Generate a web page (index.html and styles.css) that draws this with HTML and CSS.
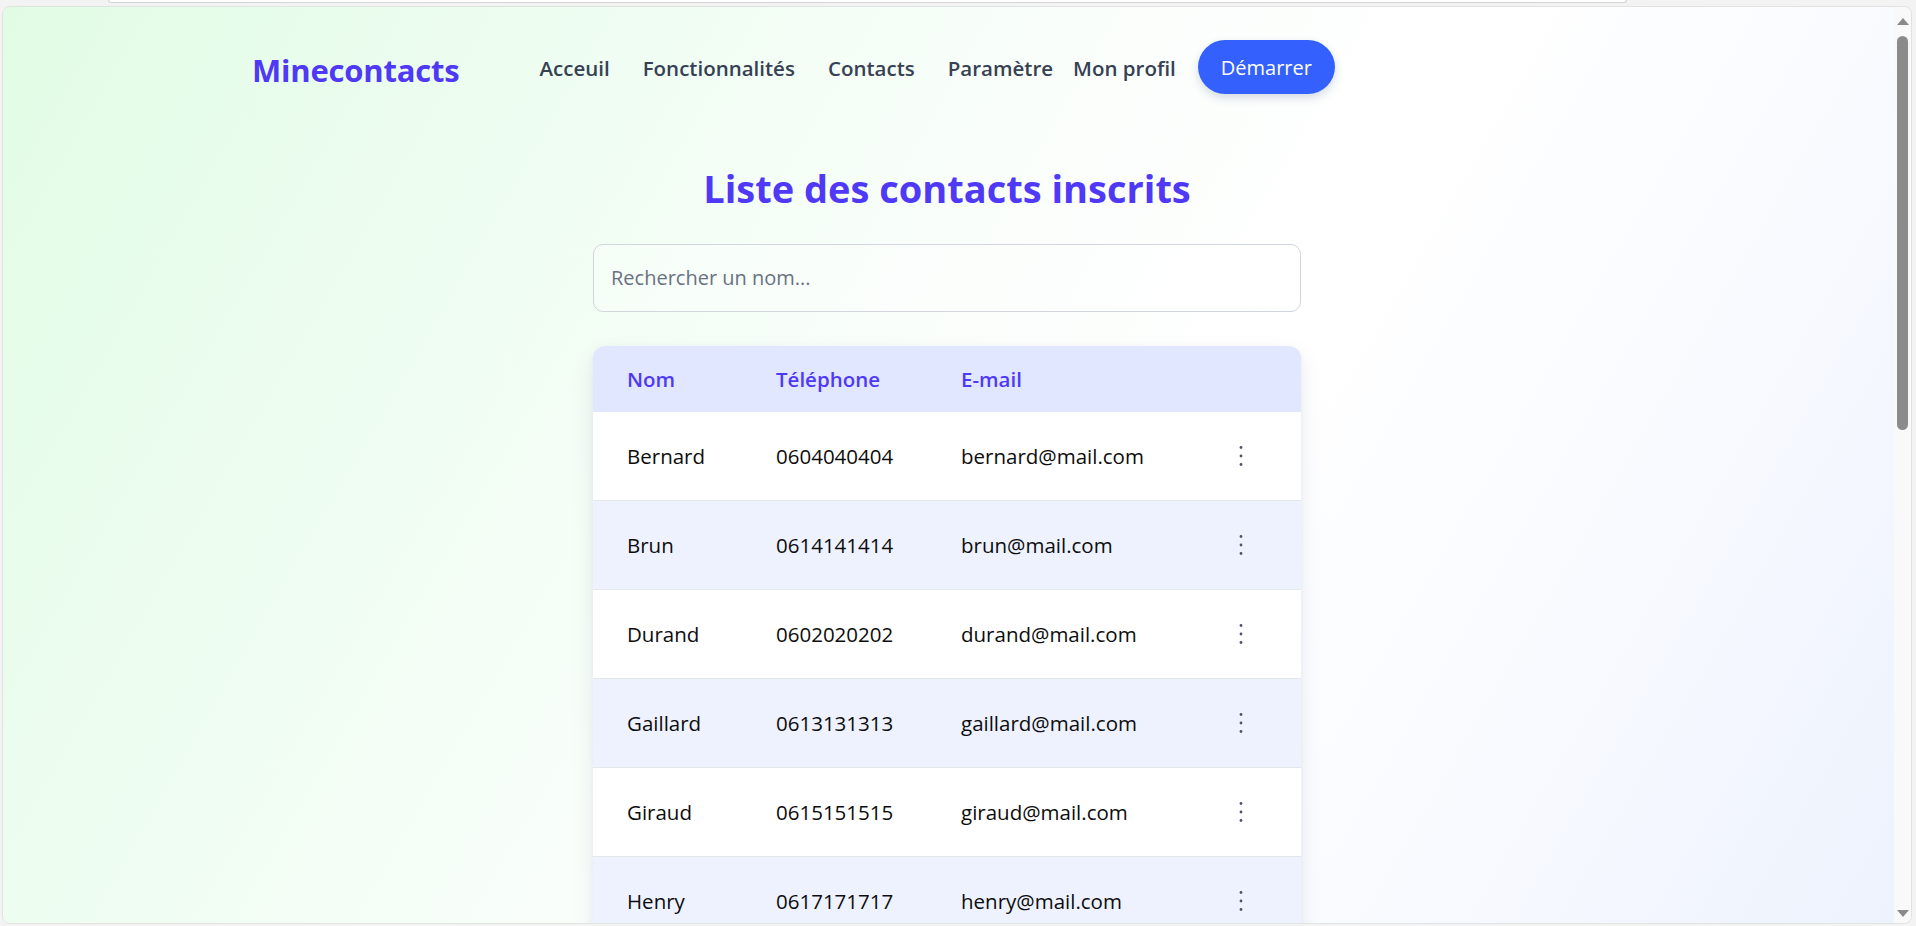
FILE: index.html
```html
<!DOCTYPE html>
<html lang="fr">
<head>
<meta charset="utf-8">
<title>Minecontacts</title>
<link rel="stylesheet" href="styles.css">
</head>
<body>
<div class="chrome-top"><div class="addr-edge"></div></div>
<div class="window">
  <div class="page">
    <nav class="nav">
      <a class="logo">Minecontacts</a>
      <ul class="links">
        <li>Acceuil</li>
        <li>Fonctionnalités</li>
        <li>Contacts</li>
        <li>Paramètre</li>
      </ul>
      <a class="profile">Mon profil</a>
      <button class="start">Démarrer</button>
    </nav>
    <main class="content">
      <h1 class="title">Liste des contacts inscrits</h1>
      <input class="search" type="text" placeholder="Rechercher un nom...">
      <div class="table">
        <div class="row head">
          <div class="cell">Nom</div>
          <div class="cell">Téléphone</div>
          <div class="cell">E-mail</div>
          <div class="cell act"></div>
        </div>
        <div class="row">
          <div class="cell">Bernard</div>
          <div class="cell">0604040404</div>
          <div class="cell">bernard@mail.com</div>
          <div class="cell act"><svg class="dots" viewBox="0 0 10 24"><circle cx="5" cy="3.5" r="1.4"/><circle cx="5" cy="12" r="1.4"/><circle cx="5" cy="20.5" r="1.4"/></svg></div>
        </div>
        <div class="row alt">
          <div class="cell">Brun</div>
          <div class="cell">0614141414</div>
          <div class="cell">brun@mail.com</div>
          <div class="cell act"><svg class="dots" viewBox="0 0 10 24"><circle cx="5" cy="3.5" r="1.4"/><circle cx="5" cy="12" r="1.4"/><circle cx="5" cy="20.5" r="1.4"/></svg></div>
        </div>
        <div class="row">
          <div class="cell">Durand</div>
          <div class="cell">0602020202</div>
          <div class="cell">durand@mail.com</div>
          <div class="cell act"><svg class="dots" viewBox="0 0 10 24"><circle cx="5" cy="3.5" r="1.4"/><circle cx="5" cy="12" r="1.4"/><circle cx="5" cy="20.5" r="1.4"/></svg></div>
        </div>
        <div class="row alt">
          <div class="cell">Gaillard</div>
          <div class="cell">0613131313</div>
          <div class="cell">gaillard@mail.com</div>
          <div class="cell act"><svg class="dots" viewBox="0 0 10 24"><circle cx="5" cy="3.5" r="1.4"/><circle cx="5" cy="12" r="1.4"/><circle cx="5" cy="20.5" r="1.4"/></svg></div>
        </div>
        <div class="row">
          <div class="cell">Giraud</div>
          <div class="cell">0615151515</div>
          <div class="cell">giraud@mail.com</div>
          <div class="cell act"><svg class="dots" viewBox="0 0 10 24"><circle cx="5" cy="3.5" r="1.4"/><circle cx="5" cy="12" r="1.4"/><circle cx="5" cy="20.5" r="1.4"/></svg></div>
        </div>
        <div class="row alt">
          <div class="cell">Henry</div>
          <div class="cell">0617171717</div>
          <div class="cell">henry@mail.com</div>
          <div class="cell act"><svg class="dots" viewBox="0 0 10 24"><circle cx="5" cy="3.5" r="1.4"/><circle cx="5" cy="12" r="1.4"/><circle cx="5" cy="20.5" r="1.4"/></svg></div>
        </div>
      </div>
    </main>
  </div>
  <div class="scrollbar">
    <div class="arrow up"></div>
    <div class="thumb"></div>
    <div class="track-rest"></div>
    <div class="arrow down"></div>
  </div>
</div>
</body>
</html>
```

FILE: styles.css
```css
html, body {
  margin: 0;
  height: 100%;
}

body {
  background: #f3f3f3;
  font-family: "Open Sans", "Noto Sans", sans-serif;
  overflow: hidden;
  display: flex;
  flex-direction: column;
}

.chrome-top {
  height: 6px;
  flex: none;
}

.addr-edge {
  margin-left: 108px;
  width: 1517px;
  height: 2px;
  background: #ffffff;
  border: 1px solid #d4d4d4;
  border-top: none;
  border-radius: 0 0 6px 6px;
}

.window {
  flex: none;
  height: 918px;
  margin: 0 4px 0 2px;
  border: 1px solid #e2e2e2;
  border-radius: 8px;
  overflow: hidden;
  display: flex;
  box-sizing: border-box;
}

.page {
  flex: 1;
  overflow: hidden;
  box-sizing: border-box;
  padding-right: 3px;
  background: linear-gradient(120deg, #e1fce5 0%, #edfdf0 22%, #fafefb 46%, #ffffff 62%, #f8faff 80%, #edf2fd 100%);
}

/* nav */
.nav {
  display: flex;
  align-items: center;
  padding: 33px 0 0 249px;
}

.logo {
  font-size: 31px;
  font-weight: 700;
  color: #4f39f6;
  margin-right: 80px;
  padding-top: 5px;
  letter-spacing: -0.2px;
}

.links {
  display: flex;
  gap: 33px;
  list-style: none;
  margin: 0;
  padding: 2px 0 0;
}

.links li,
.profile {
  font-size: 20.5px;
  font-weight: 600;
  color: #364153;
}

.profile {
  margin-left: 20px;
  padding-top: 2px;
}

.start {
  margin-left: 22px;
  height: 54px;
  padding: 0 23px;
  border: none;
  border-radius: 27px;
  background: #3461fd;
  color: #ffffff;
  font-family: inherit;
  font-size: 20px;
  box-shadow: 0 4px 10px rgba(40, 60, 120, 0.18);
}

/* content */
.content {
  width: 708px;
  margin: 0 auto;
}

.title {
  margin: 72px 0 0;
  font-size: 38px;
  line-height: 1.2;
  font-weight: 700;
  color: #4f39f6;
  text-align: center;
}

.search {
  display: block;
  box-sizing: border-box;
  width: 100%;
  height: 68px;
  margin-top: 32px;
  padding: 0 17px;
  border: 1px solid #d1d5dc;
  border-radius: 10px;
  background: rgba(255, 255, 255, 0.35);
  font-family: inherit;
  font-size: 20px;
  color: #111;
  outline: none;
}

.search::placeholder {
  color: #6a7282;
}

.table {
  margin-top: 34px;
  background: #ffffff;
  border-radius: 12px;
  overflow: hidden;
  box-shadow: 0 10px 24px rgba(30, 40, 90, 0.08), 0 2px 6px rgba(30, 40, 90, 0.05);
}

.row {
  display: grid;
  grid-template-columns: 149px 185px 250px 124px;
  align-items: center;
  height: 89px;
  box-sizing: border-box;
  border-bottom: 1px solid #e5e7eb;
  font-size: 20.5px;
  color: #0d0d0d;
}

.row.alt {
  background: #eef2ff;
}

.row.head {
  height: 66px;
  border-bottom: none;
  background: #e0e7ff;
  color: #4f39f6;
  font-weight: 600;
}

.cell {
  padding-left: 34px;
  white-space: nowrap;
}

.cell.act {
  padding-left: 4px;
  display: flex;
  justify-content: center;
}

.dots {
  width: 10px;
  height: 24px;
  fill: #4a5565;
}

/* scrollbar */
.scrollbar {
  flex: none;
  width: 17px;
  background: #f9f9f9;
  display: flex;
  flex-direction: column;
  align-items: center;
}

.arrow {
  width: 0;
  height: 0;
  border-left: 6px solid transparent;
  border-right: 6px solid transparent;
}

.arrow.up {
  margin-top: 11px;
  border-bottom: 7px solid #8a8a8a;
}

.arrow.down {
  margin-bottom: 6px;
  border-top: 7px solid #8a8a8a;
}

.thumb {
  margin-top: 11px;
  width: 11px;
  height: 394px;
  border-radius: 6px;
  background: #8b8b8b;
}

.track-rest {
  flex: 1;
}
```
